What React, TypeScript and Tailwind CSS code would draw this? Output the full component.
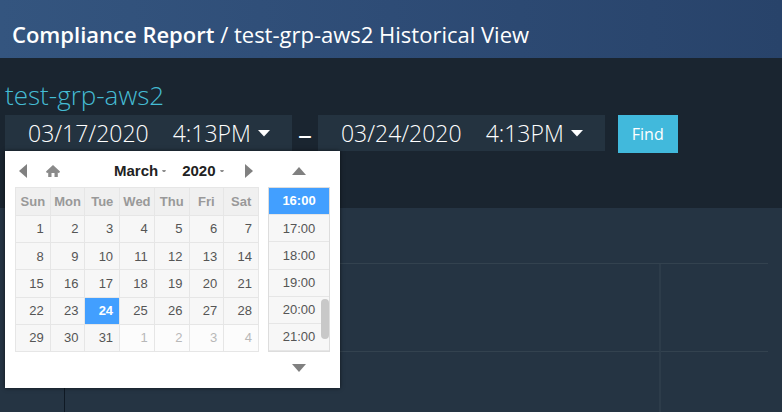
import { useState } from "react";
import clsx from "clsx";

const MONTHS = [
  "January",
  "February",
  "March",
  "April",
  "May",
  "June",
  "July",
  "August",
  "September",
  "October",
  "November",
  "December",
];

const YEARS = [2018, 2019, 2020, 2021];

const WEEKDAYS = ["Sun", "Mon", "Tue", "Wed", "Thu", "Fri", "Sat"];

const TIMES = ["16:00", "17:00", "18:00", "19:00", "20:00", "21:00"];

type Day = {
  date: number;
  outside: boolean;
};

// Sundays first, padded with the neighbouring months' days
const getWeeks = (year: number, month: number) => {
  const offset = new Date(year, month, 1).getDay();
  const count = Math.ceil((offset + new Date(year, month + 1, 0).getDate()) / 7);
  const weeks: Day[][] = [];

  for (let w = 0; w < count; w++) {
    weeks.push(
      WEEKDAYS.map((_, d) => {
        const day = new Date(year, month, w * 7 + d + 1 - offset);
        return { date: day.getDate(), outside: day.getMonth() !== month };
      })
    );
  }

  return weeks;
};

type DateFieldProps = {
  label: string;
  date: string;
  time: string;
  onClick?: () => void;
};

function DateField({ label, date, time, onClick }: DateFieldProps) {
  return (
    <button
      type="button"
      aria-label={label}
      onClick={onClick}
      className="flex h-9 items-center bg-[#243340] pl-[23px] pr-[22px] text-[23px] font-light leading-9 text-white"
    >
      <span>{date}</span>
      <span className="ml-6">{time}</span>
      <svg className="ml-[7px] h-2 w-3" viewBox="0 0 12 8" fill="currentColor">
        <path d="M0 1h12L6 7.500z" />
      </svg>
    </button>
  );
}

function SmallCaret() {
  return (
    <svg className="ml-1 h-1 w-1" viewBox="0 0 4 4" fill="#8f8f8f">
      <path d="M0 1h4L3 3H1z" />
    </svg>
  );
}

function Calendar() {
  const [month, setMonth] = useState(2);
  const [year, setYear] = useState(2020);
  const [selected, setSelected] = useState(24);
  const [time, setTime] = useState("16:00");

  const shiftMonth = (step: number) => {
    const next = new Date(year, month + step, 1);
    setMonth(next.getMonth());
    setYear(next.getFullYear());
  };

  return (
    <div className="absolute left-0 top-full z-10 flex gap-[9px] bg-white px-[10px] pb-9 font-['Liberation_Sans',Arial,sans-serif] text-[13px] text-[#555] shadow-[0_0_4px_rgba(0,0,0,0.6)]">
      <div>
        <div className="flex h-9 items-center pt-1 text-[15px] font-bold text-[#222]">
          <button
            type="button"
            aria-label="Previous month"
            className="ml-1"
            onClick={() => shiftMonth(-1)}
          >
            <svg className="h-4 w-2" viewBox="0 0 8 16" fill="#808080">
              <path d="M8 1v14L0 8z" />
            </svg>
          </button>
          <button
            type="button"
            aria-label="Today"
            className="ml-[18px]"
            onClick={() => {
              setMonth(2);
              setYear(2020);
            }}
          >
            <svg className="h-4 w-4" viewBox="0 0 16 16" fill="#8a8a8a">
              <path d="M8 2L1 8.500l1 1.700 1.200-.8V14h3.300v-4h3v4h3.300V9.400l1.200.8 1-1.700z" />
            </svg>
          </button>
          <div className="ml-[53px] flex items-center">
            <select
              aria-label="Month"
              className="field-sizing-content appearance-none bg-transparent"
              value={month}
              onChange={(e) => setMonth(Number(e.target.value))}
            >
              {MONTHS.map((name, i) => (
                <option key={name} value={i}>
                  {name}
                </option>
              ))}
            </select>
            <SmallCaret />
          </div>
          <div className="ml-4 flex items-center">
            <select
              aria-label="Year"
              className="field-sizing-content appearance-none bg-transparent"
              value={year}
              onChange={(e) => setYear(Number(e.target.value))}
            >
              {YEARS.map((y) => (
                <option key={y} value={y}>
                  {y}
                </option>
              ))}
            </select>
            <SmallCaret />
          </div>
          <button
            type="button"
            aria-label="Next month"
            className="ml-auto mr-[6px]"
            onClick={() => shiftMonth(1)}
          >
            <svg className="h-4 w-2" viewBox="0 0 8 16" fill="#808080">
              <path d="M0 1v14l8-7z" />
            </svg>
          </button>
        </div>

        <table className="h-[165px] w-[244px] table-fixed border-collapse">
          <thead>
            <tr>
              {WEEKDAYS.map((day) => (
                <th
                  key={day}
                  className="h-7 border border-[#e6e6e6] bg-[#f0f0f0] p-0 text-center font-bold text-[#999]"
                >
                  {day}
                </th>
              ))}
            </tr>
          </thead>
          <tbody>
            {getWeeks(year, month).map((week, i) => (
              <tr key={i}>
                {week.map(({ date, outside }) => {
                  const active = !outside && date === selected;
                  return (
                    <td
                      key={date}
                      className={clsx(
                        "border border-[#e6e6e6] p-0",
                        active ? "bg-[#429fff]" : outside ? "bg-[#fcfcfc]" : "bg-[#f7f7f7]"
                      )}
                    >
                      <button
                        type="button"
                        onClick={() => setSelected(date)}
                        className={clsx(
                          "block w-full pr-1.5 text-right",
                          active && "font-bold text-white",
                          outside && "text-[#b8b8b8]"
                        )}
                      >
                        {date}
                      </button>
                    </td>
                  );
                })}
              </tr>
            ))}
          </tbody>
        </table>
      </div>

      <div className="flex w-[62px] flex-col">
        <button
          type="button"
          aria-label="Earlier"
          className="flex h-9 items-center justify-center pt-1"
        >
          <svg className="h-2 w-4" viewBox="0 0 16 8" fill="#808080">
            <path d="M8 0l7 8H1z" />
          </svg>
        </button>
        <div className="relative flex h-[165px] flex-col border border-[#ddd]">
          {TIMES.map((t) => (
            <button
              key={t}
              type="button"
              onClick={() => setTime(t)}
              className={clsx(
                "flex-1 border-b border-[#e6e6e6] last:border-b-0",
                t === time ? "bg-[#429fff] font-bold text-white" : "bg-[#f7f7f7]"
              )}
            >
              {t}
            </button>
          ))}
          <span className="absolute bottom-3 right-0 h-10 w-2 rounded-sm bg-[#c8c8c8]" />
        </div>
        <button
          type="button"
          aria-label="Later"
          className="-mb-9 flex h-8 items-center justify-center"
        >
          <svg className="h-2 w-4" viewBox="0 0 16 8" fill="#808080">
            <path d="M8 8L1 0h14z" />
          </svg>
        </button>
      </div>
    </div>
  );
}

// Empty plot area: axis on the left, two grid rows and one grid column
function ChartGrid() {
  return (
    <div className="flex flex-1 bg-[#253443]">
      <div className="w-[65px] border-r border-[#0f1924]" />
      <div className="mr-[14px] grid flex-1 grid-cols-[597fr_107fr] grid-rows-[56px_88px_1fr]">
        <div className="border-b border-[#33424f]" />
        <div className="border-b border-[#33424f]" />
        <div className="border-b border-r-2 border-[#2d3c4a] border-b-[#33424f]" />
        <div className="border-b border-[#33424f]" />
        <div className="border-r-2 border-[#2d3c4a]" />
      </div>
    </div>
  );
}

export default function App() {
  const [open, setOpen] = useState(true);

  return (
    <div className="flex min-h-screen flex-col bg-[#1a2530] font-['Open_Sans',sans-serif] text-white">
      <header className="bg-linear-to-r from-[#34557f] via-[#2e4c76] to-[#28436a] px-3 pb-1 pt-[14px]">
        <h1 className="text-[22px] leading-10">
          <span className="font-semibold">Compliance Report</span> / test-grp-aws2
          Historical View
        </h1>
      </header>

      <main className="flex flex-1 flex-col">
        <section className="px-[5px] pb-[55px] pt-[17px]">
          <h2 className="text-[26px] font-light leading-10 text-[#45bcd4]">
            test-grp-aws2
          </h2>
          <div className="flex items-start">
            <div className="relative">
              <DateField
                label="Start date"
                date="03/17/2020"
                time="4:13PM"
                onClick={() => setOpen(!open)}
              />
              {open && <Calendar />}
            </div>
            <span className="mx-[6px] text-[28px] leading-9">–</span>
            <DateField label="End date" date="03/24/2020" time="4:13PM" />
            <button
              type="button"
              className="ml-[13px] h-[38px] bg-[#41b9dc] px-[14px] text-base text-white"
            >
              Find
            </button>
          </div>
        </section>
        <ChartGrid />
      </main>
    </div>
  );
}
